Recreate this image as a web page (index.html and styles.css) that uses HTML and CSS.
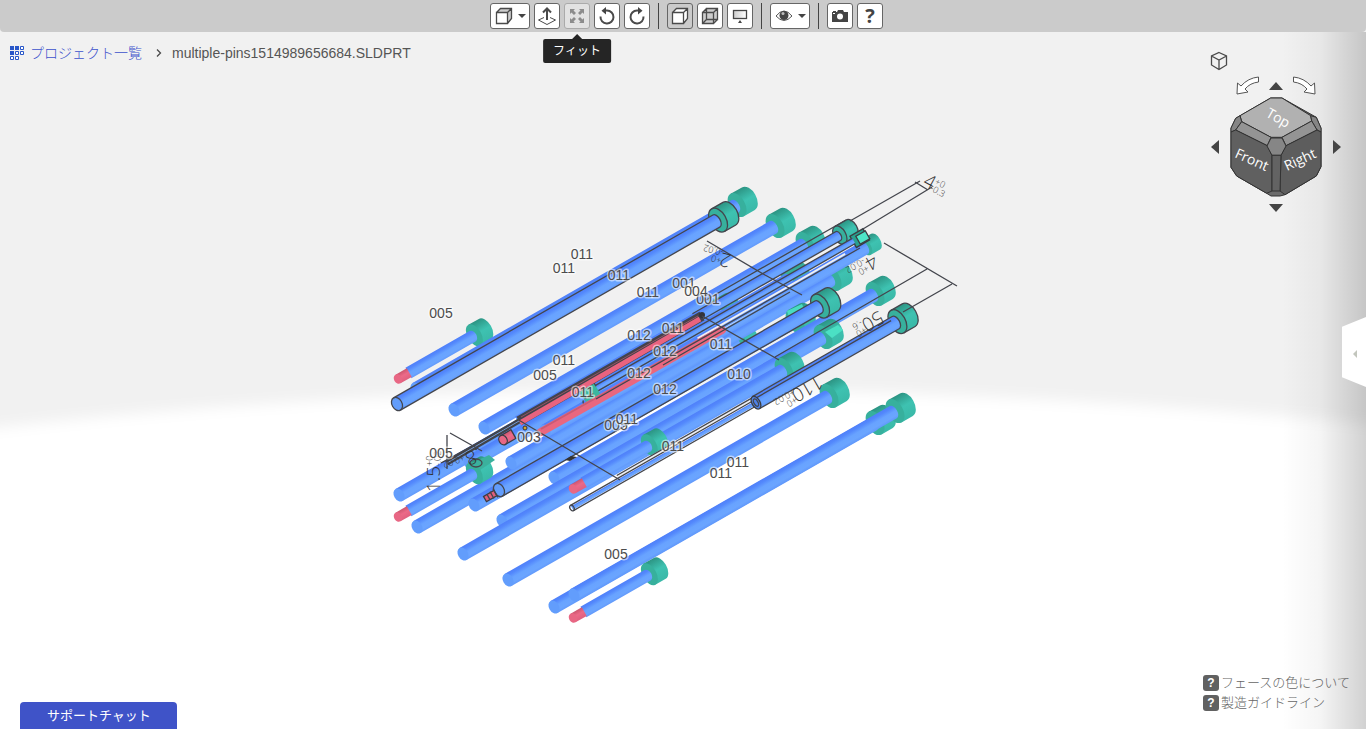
FILE: index.html
```html
<!DOCTYPE html>
<html lang="ja">
<head>
<meta charset="utf-8">
<title>multiple-pins1514989656684.SLDPRT</title>
<link rel="stylesheet" href="styles.css">
</head>
<body>
<div class="viewer">
  <svg class="backdrop" viewBox="0 0 1366 729" preserveAspectRatio="none" aria-hidden="true">
    <defs>
      <filter id="soft" x="-5%" y="-10%" width="110%" height="120%"><feGaussianBlur stdDeviation="7"/></filter>
    </defs>
    <rect width="1366" height="729" fill="#f1f1f1"/>
    <path d="M-60 434 Q300 391 680 389 Q1060 391 1430 430 V800 H-60Z" fill="#fff" filter="url(#soft)"/>
  </svg>

  <svg class="scene" viewBox="0 0 1366 729" role="img" aria-label="multiple-pins">
    <defs>
      <linearGradient id="blue" x1="0" y1="0" x2="0" y2="1">
        <stop offset="0" stop-color="#4f80fa"/><stop offset=".2" stop-color="#5388fc"/><stop offset=".5" stop-color="#68a3ff"/><stop offset=".8" stop-color="#6ba5ff"/><stop offset="1" stop-color="#6199fb"/>
      </linearGradient>
      <linearGradient id="teal" x1="0" y1="0" x2="0" y2="1">
        <stop offset="0" stop-color="#2c9483"/><stop offset=".5" stop-color="#3ec2b1"/><stop offset="1" stop-color="#3ab9a8"/>
      </linearGradient>
      <linearGradient id="pink" x1="0" y1="0" x2="0" y2="1">
        <stop offset="0" stop-color="#cc566f"/><stop offset=".45" stop-color="#ec6a88"/><stop offset="1" stop-color="#e0607f"/>
      </linearGradient>
      <g id="head">
        <path d="M370 -13H383A8 13 0 0 1 383 13H370Z" fill="url(#teal)"/>
        <ellipse cx="370" rx="8" ry="13" fill="#37b09d"/>
      </g>
      <g id="body">
        <path d="M0 -7H368A4 7 0 0 1 368 7H0Z" fill="url(#blue)"/>
        <ellipse rx="5" ry="7" fill="#629dfc"/>
      </g>
      <g id="pin"><g transform="rotate(-29.8)"><use href="#head"/><use href="#body"/></g></g>
      <g id="pin-small"><g transform="rotate(-29.8)">
        <path d="M370 -9H381A5 9 0 0 1 381 9H370Z" fill="url(#teal)"/><ellipse cx="370" rx="5" ry="9" fill="#37b09d"/>
        <use href="#body"/></g></g>
      <g id="pin-line"><g transform="rotate(-29.8)">
        <use href="#head"/>
        <g class="edge"><path d="M370 -13H383A8 13 0 0 1 383 13H370"/><ellipse cx="370" rx="8" ry="13"/></g>
        <use href="#body"/>
        <g class="edge"><path d="M0 -7H368A4 7 0 0 1 368 7H0"/><ellipse rx="5" ry="7"/></g>
      </g></g>
      <g id="stub"><g transform="rotate(-29.8)">
        <path d="M88 -12H100A7 12 0 0 1 100 12H88Z" fill="url(#teal)"/><ellipse cx="88" rx="7" ry="12" fill="#37b09d"/>
        <path d="M12 -6H86A4 6 0 0 1 86 6H12Z" fill="url(#blue)"/>
        <path d="M0 -5H13V5H0Z" fill="url(#pink)"/><ellipse rx="4" ry="5" fill="#e86784"/>
      </g></g>
    </defs>

    <!-- pins, back to front -->
    <use href="#stub" x="398" y="379"/>
    <use href="#pin" x="416" y="389"/>
    <use href="#pin-line" x="397" y="404"/>
    <use href="#pin" x="454" y="410"/>
    <use href="#pin" x="484" y="428"/>
    <use href="#pin" x="399" y="495"/>
    <use href="#pin" x="469" y="463"/>
    <use href="#pin" x="417" y="527"/>
    <use href="#pin" x="511" y="463"/>
    <use href="#pin" x="474" y="505"/>
    <path d="M787 311L802 304L805 311L790 320Z" fill="#48dcc0"/>
    <use href="#pin-small" x="545" y="431"/>
    <use href="#pin" x="554" y="478"/>
    <use href="#pin" x="502" y="521"/>
    <path d="M825 332L838 325L843 330L832 338Z" fill="#4be0c4"/>
    <use href="#pin" x="463" y="554"/>

    <!-- ejector sleeve with small outlined head -->
    <g transform="translate(517 420) rotate(-29.8)">
      <path d="M372 -10H385A6 10 0 0 1 385 10H372Z" fill="url(#teal)"/><ellipse cx="372" rx="6" ry="10" fill="#37b09d"/>
      <g class="edge"><path d="M372 -10H385A6 10 0 0 1 385 10H372"/><ellipse cx="372" rx="6" ry="10"/></g>
      <path d="M170 -5H370A3 5 0 0 1 370 5H0V-4Z" fill="url(#blue)"/>
      <path class="edge" d="M205 -5H370A3 5 0 0 1 370 5H210"/>
    </g>
    <!-- thin square-headed pin -->
    <g transform="translate(590 392) rotate(-29.8)">
      <path d="M-70 13H10L210 11H110L-68 14Z" fill="#edf0f5"/>
      <path d="M120 6H290V8H120Z" fill="#f1f1f1"/>
      <path d="M303 -6H318V7H303Z" fill="#28a18f" class="solid-edge"/>
      <path d="M308 -3H319V6H308Z" fill="#4ee5c7" class="solid-edge"/>
      <path d="M0 -3H304V3H0Z" fill="url(#blue)"/>
      <path class="edge" d="M0 -3H304M0 3H304"/>
      <path d="M-10 -6H8V8H-8Z" fill="#3ab79f"/>
      <path class="edge" d="M8 -7V-2M-10 4Q-14 8 -6 8H-2M-8 3H2"/>
    </g>
    <path d="M722 330L541 432" stroke="#e9677f" stroke-width="8" stroke-linecap="round"/>
    <path d="M722 327L541 429" stroke="#c95b74" stroke-width="2"/>
    <!-- outlined core pin -->
    <path d="M519 421L702 316" stroke="#42434b" stroke-width="10"/>
    <path d="M520 423L700 319" stroke="#e9637f" stroke-width="5"/>
    <path d="M521 417L698 316" stroke="#9b5263" stroke-width="1"/>
    <path d="M447 463L519 421" stroke="#424348" stroke-width="5"/>
    <path d="M447 463L519 421" stroke="#739cd8" stroke-width="1"/>
    <circle cx="702" cy="315" r="3" fill="#33343a"/>

    <use href="#stub" x="398" y="517"/>
    <path d="M472 463L489 455L495 460L480 470Z" fill="#3bb19d"/>
    <ellipse class="edge" cx="476" cy="463" rx="6" ry="4"/>
    <use href="#pin-line" x="499" y="490"/>
    <g transform="translate(485 499) rotate(-29.8)"><path d="M0 -3H12V3H0Z" fill="#e05f7b" class="solid-edge"/><path class="edge" d="M4 -3V3M8 -4V4M12 -5V5"/></g>
    <g transform="translate(503 440) rotate(-29.8)"><path d="M0 -5H12V5H0Z" fill="url(#pink)" class="solid-edge"/><ellipse rx="4" ry="5" fill="#e86784" class="solid-edge"/></g>
    <circle cx="525" cy="428" r="2" fill="#d2a52c" stroke="#333"/>
    <use href="#stub" x="573" y="489"/>

    <!-- front rows -->
    <path d="M565 460l6 -4l6 1l-7 4z" fill="#333"/>
    <g transform="translate(572 508) rotate(-29.8)">
      <path d="M55 -5H210" stroke="#f0f0f2" stroke-width="3"/>
      <path class="edge" d="M55 -6H212"/>
      <path d="M0 -2H212V2H0Z" fill="url(#blue)"/><path class="edge" d="M0 -3H212M0 3H212"/><ellipse class="edge" rx="2" ry="3"/>
      <use href="#head" x="5"/><g class="edge"><path d="M375 -13H388A8 13 0 0 1 388 13H375"/><ellipse cx="375" rx="8" ry="13"/></g>
      <path d="M212 -7H373A4 7 0 0 1 373 7H212Z" fill="url(#blue)"/>
      <path class="edge" d="M212 -7H373A4 7 0 0 1 373 7H212M212 -4H370"/>
      <ellipse cx="212" rx="4" ry="7" fill="#4e82e8" class="solid-edge"/><ellipse class="edge" cx="212" rx="2" ry="4"/>
    </g>
    <use href="#pin" x="508" y="580"/>
    <use href="#pin" x="554" y="607"/>
    <use href="#pin" x="574" y="595"/>
    <use href="#stub" x="573" y="618"/>

    <!-- dimension lines -->
    <g class="edge">
      <path d="M850 221L920 181M863 229L932 187M915 182L928 190M884 243L957 286M927 269L775 357M952 284L903 312M707 241L765 275L802 295M702 316L779 360M517 419L620 480M450 433L482 451M447 435V469M441 463L510 425M706 300L846 220M596 399L860 248M663 365L790 292"/>
    </g>
    <g class="dim">
      <g transform="translate(922 185) rotate(28)"><text>4</text><text class="tol" x="10" y="-7">+0</text><text class="tol" x="9" y="1">-0.3</text></g>
      <g transform="translate(873 254) rotate(150)"><text>4</text><text class="tol" x="11" y="-6">+0</text><text class="tol" x="11" y="2">-0.02</text></g>
      <g transform="translate(732 255) rotate(195)"><text>2</text><text class="tol" x="9" y="-5">+0</text><text class="tol" x="9" y="3">-0.02</text></g>
      <g transform="translate(879 310) rotate(150)"><text>50</text><text class="tol" x="21" y="-7">+0</text><text class="tol" x="21" y="1">-.6</text></g>
      <g transform="translate(818 375) rotate(150)"><text>110</text><text class="tol" x="31" y="-7">+0</text><text class="tol" x="29" y="1">+0.02</text></g>
      <g transform="translate(440 492) rotate(-90)"><text>1.5</text><text class="tol" x="26" y="-7">+0</text><text class="tol" x="26" y="1">-.02</text></g>
      <g transform="translate(478 448) rotate(160)"><text>.8</text><text class="tol" x="16" y="-1">+0.02</text></g>
    </g>

    <!-- face group labels -->
    <g class="tag">
      <text x="441" y="318">005</text><text x="582" y="259">011</text><text x="564" y="273">011</text><text x="619" y="280">011</text>
      <text x="648" y="297">011</text><text x="684" y="288">001</text><text x="708" y="304">001</text><text x="696" y="296">004</text>
      <text x="639" y="340">012</text><text x="673" y="333">011</text><text x="665" y="356">012</text><text x="721" y="349">011</text>
      <text x="639" y="378">012</text><text x="665" y="394">012</text><text x="739" y="379">010</text><text x="564" y="365">011</text>
      <text x="545" y="380">005</text><text x="583" y="397">011</text><text x="616" y="430">005</text><text x="627" y="424">011</text>
      <text x="529" y="442">003</text><text x="441" y="458">005</text><text x="673" y="451">011</text><text x="738" y="467">011</text>
      <text x="721" y="478">011</text><text x="616" y="559">005</text>
    </g>
  </svg>

  <div class="edge-shade"></div>

  <header class="toolbar">
    <button class="tool tool-wide" aria-label="表示方向">
      <svg width="18" height="18" viewBox="0 0 18 18"><path d="M1.500 5.500 5.500 1.500H16.500V11.500L12.500 16.500H1.500Z" fill="#fff"/><path d="M12.500 5.500 16.500 1.500V11.500L12.500 16.500ZM1.500 5.500 5.500 1.500H16.500L12.500 5.500Z" fill="#ccc"/><path d="M1.500 5.500H12.500V16.500H1.500ZM1.500 5.500 5.500 1.500H16.500V11.500L12.500 16.500M12.500 5.500 16.500 1.500" class="ink"/></svg>
      <svg class="caret" width="8" height="4" viewBox="0 0 8 4"><path d="M0 0H8L4 4Z" fill="#444"/></svg>
    </button>
    <button class="tool" aria-label="面に垂直">
      <svg width="20" height="20" viewBox="0 0 20 20"><path d="M7 11.500 1.500 14 10 18.500 18.500 14 13 11.500" class="ink thin"/><path d="M10 14V3M6 6.500 10 2.500 14 6.500" class="ink bold"/></svg>
    </button>
    <span class="tip-anchor">
      <button class="tool tool-off" aria-label="フィット" aria-describedby="fit-tip">
        <svg width="16" height="16" viewBox="0 0 16 16" fill="#8c8c8c"><path d="M1 1H6L4.500 2.500 7 5 5 7 2.500 4.500 1 6ZM15 1V6L13.500 4.500 11 7 9 5 11.500 2.500 10 1ZM1 15V10L2.500 11.500 5 9 7 11 4.500 13.500 6 15ZM15 15H10L11.500 13.500 9 11 11 9 13.500 11.500 15 10Z"/></svg>
      </button>
      <span class="tip" id="fit-tip" role="tooltip">フィット</span>
    </span>
    <button class="tool" aria-label="元に戻す">
      <svg width="18" height="18" viewBox="0 0 18 18"><path d="M2.500 9.500A6.500 6.500 0 1 0 9 3.500H6" class="ink bold"/><path d="M8 0V7.500L3.500 3.700Z" fill="#444"/></svg>
    </button>
    <button class="tool" aria-label="やり直し">
      <svg width="18" height="18" viewBox="0 0 18 18"><path d="M15.500 9.500A6.500 6.500 0 1 1 9 3.500H12" class="ink bold"/><path d="M10 0V7.500L14.500 3.700Z" fill="#444"/></svg>
    </button>
    <span class="divider"></span>
    <button class="tool tool-on" aria-label="シェーディング">
      <svg width="18" height="18" viewBox="0 0 18 18"><path d="M1.500 5.500 5.500 1.500H16.500V11.500L12.500 16.500H1.500Z" fill="#fff"/><path d="M1.500 5.500H12.500V16.500H1.500ZM1.500 5.500 5.500 1.500H16.500V11.500L12.500 16.500M12.500 5.500 16.500 1.500" class="ink"/></svg>
    </button>
    <button class="tool" aria-label="ワイヤーフレーム">
      <svg width="18" height="18" viewBox="0 0 18 18"><path d="M1.500 5.500 5.500 1.500H16.500V11.500L12.500 16.500H1.500Z" fill="#ccc"/><path d="M1.500 5.500H12.500V16.500H1.500ZM5.500 1.500H16.500V12.500H5.500ZM1.500 5.500 5.500 1.500M12.500 5.500 16.500 1.500M1.500 16.500 5.500 12.500M12.500 16.500 16.500 12.500" class="ink"/></svg>
    </button>
    <button class="tool" aria-label="背景">
      <svg width="18" height="18" viewBox="0 0 18 18"><defs><linearGradient id="screen"><stop offset="0" stop-color="#ccc"/><stop offset="1" stop-color="#fff"/></linearGradient></defs><rect x="2.500" y="3.500" width="13" height="8" fill="url(#screen)" class="frame"/><path d="M7 16 9 13 11 16Z" fill="#444"/></svg>
    </button>
    <span class="divider"></span>
    <button class="tool tool-wide" aria-label="表示">
      <svg width="18" height="18" viewBox="0 0 18 18"><path d="M1 9Q9 -1 17 9Q9 18 1 9Z" fill="#fff" stroke="#555"/><circle cx="9" cy="8.500" r="4.500" fill="#444"/><circle cx="8" cy="6.500" r="1.500" fill="#bbb"/></svg>
      <svg class="caret" width="8" height="4" viewBox="0 0 8 4"><path d="M0 0H8L4 4Z" fill="#444"/></svg>
    </button>
    <span class="divider"></span>
    <button class="tool" aria-label="スクリーンショット">
      <svg width="18" height="18" viewBox="0 0 18 18"><path d="M1 5H2V4H5V5H6L7 3H12L13 5H17V15H1Z" fill="#444"/><circle cx="9" cy="9.500" r="3" fill="#fff"/><path d="M2 6H4V7H2Z" fill="#fff"/></svg>
    </button>
    <button class="tool tool-help">?</button>
  </header>

  <nav class="crumbs">
    <a class="crumb-link" href="#projects">
      <svg width="14" height="14" viewBox="0 0 14 14"><path d="M0 0H4V4H0ZM5 0H9V4H5ZM0 5H4V9H0Z" fill="#2856c8"/><path d="M10.500 .5H13.500V3.500H10.500ZM5.500 5.500H8.500V8.500H5.500ZM10.500 5.500H13.500V8.500H10.500ZM.5 10.500H3.500V13.500H.5ZM5.500 10.500H8.500V13.500H5.500Z" fill="#fff" stroke="#2856c8"/></svg>
      <span>プロジェクト一覧</span>
    </a>
    <svg class="crumb-sep" width="6" height="8" viewBox="0 0 6 8"><path d="M1 .5 4.500 4 1 7.500" class="ink"/></svg>
    <span class="crumb-file">multiple-pins1514989656684.SLDPRT</span>
  </nav>

  <div class="navigator">
    <button class="bare home" aria-label="等角投影">
      <svg width="18" height="20" viewBox="0 0 18 20"><path d="M9 1.500 16.500 5V14L9 18.500 1.500 14V5ZM1.500 5 9 9 16.500 5M9 9V18.500" class="ink"/></svg>
    </button>
    <div class="nav-row nav-top">
      <button class="bare" aria-label="左回転"><svg width="26" height="22" viewBox="0 0 26 22"><path d="M23.500 2V7Q15 8 10 14L13 17 2 19 2.500 8 6 11Q13 3 23.500 2Z" fill="#fff" stroke="#555"/></svg></button>
      <button class="bare" aria-label="上"><svg width="16" height="10" viewBox="0 0 16 10"><path d="M1 9 8 1 15 9Z" fill="#444"/></svg></button>
      <button class="bare" aria-label="右回転"><svg width="26" height="22" viewBox="0 0 26 22"><path d="M2.500 2V7Q11 8 16 14L13 17 24 19 23.500 8 20 11Q13 3 2.500 2Z" fill="#fff" stroke="#555"/></svg></button>
    </div>
    <div class="nav-row">
      <button class="bare" aria-label="左"><svg width="10" height="16" viewBox="0 0 10 16"><path d="M9 1 1 8 9 15Z" fill="#444"/></svg></button>
      <svg class="cube" width="92" height="100" viewBox="0 0 92 100">
        <g stroke="#333" stroke-width="1" stroke-linejoin="round">
          <path d="M40.700 1H52L86.300 20.300 91 31.300V69.700L86.300 79 55 97.700 50 99H41L36.700 96.300 6.700 79 1 70.300V31.300L5.700 21.300Z" fill="#6b6b6b"/>
          <path d="M40.700 1H52L80.700 18.700 81.700 24 52 40.300H41L11.700 24.700 10 18.700Z" fill="#b1b1b1"/>
          <path d="M10 18.700 11.700 24.700 5.700 33 1 35V31L5.700 21.300ZM80.700 18.700 81.700 24 87 33 91 35V31L86.300 20.300Z" fill="#858585"/>
          <path d="M11.700 24.700 41 40.300 37.300 48.700 5.700 33ZM52 40.300 81.700 24 87 33 56 48.700Z" fill="#949494"/>
          <path d="M1 35 5.700 33 37.300 48.700 42 58.300V94L36.700 96.300 6.700 79 1 70.300Z" fill="#606060"/>
          <path d="M91 35 87 33 56 48.700 51 58.300 50 94 55 97.700 86.300 79 91 69.700Z" fill="#5d5d5d"/>
          <path d="M41 41H52L56 49 51 58.300H42L37 49Z" fill="#868686"/>
          <path d="M42 58.300H51L50 94H42Z" fill="#636363"/>
        </g>
        <g class="cube-text">
          <text transform="translate(4 60) rotate(24)">Front</text>
          <text transform="translate(57 74) rotate(-25)">Right</text>
          <text transform="translate(35 19) rotate(30)">Top</text>
        </g>
      </svg>
      <button class="bare" aria-label="右"><svg width="10" height="16" viewBox="0 0 10 16"><path d="M1 1 9 8 1 15Z" fill="#444"/></svg></button>
    </div>
    <button class="bare down" aria-label="下"><svg width="16" height="10" viewBox="0 0 16 10"><path d="M1 1H15L8 9Z" fill="#444"/></svg></button>
  </div>

  <button class="drawer" aria-label="パネルを開く"><svg width="4" height="8" viewBox="0 0 4 8"><path d="M4 0V8L0 4Z" fill="#c3c6bd"/></svg></button>

  <div class="guides">
    <a href="#face-colors"><span class="mark">?</span>フェースの色について</a>
    <a href="#guideline"><span class="mark">?</span>製造ガイドライン</a>
  </div>

  <button class="chat">サポートチャット</button>
</div>
</body>
</html>
```
FILE: styles.css
```css
* { box-sizing: border-box; }

body {
  margin: 0;
  font-family: "Liberation Sans", "Noto Sans CJK JP", sans-serif;
  color: #555;
}

button { font-family: inherit; cursor: pointer; }

.viewer {
  position: relative;
  height: 100vh;
  overflow: hidden;
  background: #fff;
}

.backdrop, .scene {
  position: absolute;
  inset: 0;
  width: 100%;
  height: 100%;
}

.edge { fill: none; stroke: #44464d; stroke-width: 1.3px; }
.solid-edge { stroke: #3b3d42; stroke-width: 1.3px; }

.tag {
  font-size: 14px;
  text-anchor: middle;
  fill: #4c4c4c;
  stroke: rgba(255, 255, 255, .55);
  stroke-width: 3px;
  stroke-linejoin: round;
  paint-order: stroke;
}

.dim { font-family: "Open Sans", sans-serif; font-size: 19px; font-weight: 300; fill: #333; }
.tol { font-size: 9px; }

.edge-shade {
  position: absolute;
  inset: 32px 0 0 auto;
  width: 84px;
  background: linear-gradient(to right, rgba(0, 0, 0, 0), rgba(0, 0, 0, .04) 45%, rgba(0, 0, 0, .18));
}

.toolbar {
  position: relative;
  display: flex;
  align-items: center;
  justify-content: center;
  gap: 4px;
  height: 32px;
  padding-left: 7px;
  background: #cbcbcb;
  border-radius: 0 0 4px 4px;
}

.tool {
  display: flex;
  align-items: center;
  justify-content: center;
  width: 26px;
  height: 26px;
  padding: 0;
  background: #fff;
  border: 1px solid #666;
  border-radius: 3px;
}

.tool-wide { width: 40px; gap: 5px; }
.tool-on { background: #cbcbcb; }
.tool-off { background: #e2e2e2; border-color: #aaa; }
.tool-help { font: bold 20px/24px "Open Sans", sans-serif; color: #444; }

.divider { width: 1px; height: 26px; margin: 0 4px; background: #444; }

.ink { fill: none; stroke: #4a4a4a; stroke-width: 1.3px; }
.thin { stroke-width: 1px; }
.bold { stroke-width: 2px; }
.frame { stroke: #444; stroke-width: 1.3px; }

.tip-anchor { position: relative; }

.tip {
  position: absolute;
  top: 36px;
  left: 50%;
  transform: translateX(-50%);
  padding: 0 10px;
  font-size: 12px;
  line-height: 24px;
  white-space: nowrap;
  color: #fff;
  background: #252525;
  border-radius: 2px;
}

.tip::before {
  content: "";
  position: absolute;
  bottom: 100%;
  left: 50%;
  margin-left: -5px;
  border: 5px solid transparent;
  border-top: 0;
  border-bottom-color: #252525;
}

.crumbs {
  position: relative;
  display: flex;
  align-items: center;
  padding: 11px 10px;
  line-height: 20px;
}

.crumb-link {
  display: flex;
  align-items: center;
  gap: 6px;
  font-size: 14px;
  font-weight: 300;
  color: #3d52cc;
  text-decoration: none;
}

.crumb-sep { margin: 0 10px 0 14px; }
.crumb-file { font-size: 14px; }

.navigator {
  position: absolute;
  top: 51px;
  right: 24px;
  display: flex;
  flex-direction: column;
  align-items: center;
  width: 132px;
}

.bare { display: flex; padding: 0; background: none; border: 0; }
.home { align-self: flex-start; }
.nav-row { display: flex; align-items: center; justify-content: space-between; width: 100%; }
.nav-top { justify-content: center; gap: 7px; height: 26px; padding-top: 4px; }
.down { margin-top: 6px; }

.cube-text { font: 14px "Open Sans", sans-serif; fill: #fff; }

.drawer {
  position: absolute;
  top: 317px;
  right: 0;
  width: 24px;
  height: 70px;
  padding: 2px 0 0 11px;
  text-align: left;
  background: #fff;
  border: 0;
  clip-path: polygon(100% 0, 0 14%, 0 86%, 100% 100%);
}

.guides {
  position: absolute;
  right: 15px;
  bottom: 16px;
  display: flex;
  flex-direction: column;
  width: 148px;
}

.guides a {
  display: flex;
  align-items: center;
  gap: 2px;
  font-size: 13px;
  font-weight: 300;
  line-height: 20px;
  white-space: nowrap;
  color: #666;
  text-decoration: none;
}

.mark {
  width: 16px;
  height: 16px;
  font-size: 12px;
  font-weight: 700;
  line-height: 16px;
  text-align: center;
  color: #fff;
  background: #616161;
  border-radius: 3px;
}

.chat {
  position: absolute;
  bottom: 0;
  left: 20px;
  height: 27px;
  padding: 0 26px 0 27px;
  font-size: 13px;
  line-height: 26px;
  color: #fff;
  background: #3f53c8;
  border: 0;
  border-radius: 4px 4px 0 0;
}
```
